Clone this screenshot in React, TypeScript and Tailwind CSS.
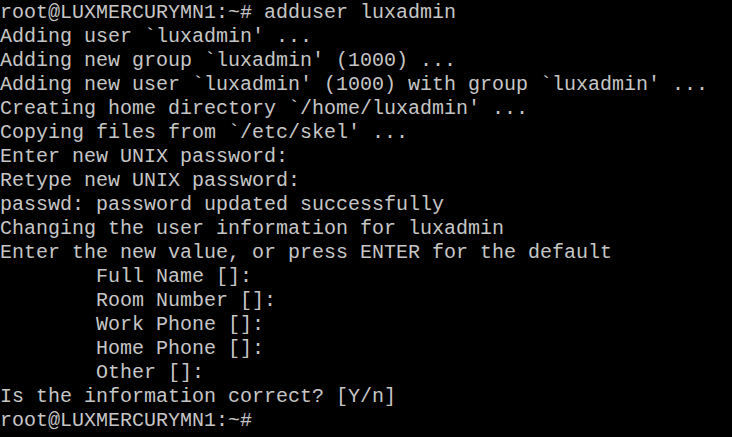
import React from 'react';

const lines = [
  'root@LUXMERCURYMN1:~# adduser luxadmin',
  "Adding user `luxadmin' ...",
  "Adding new group `luxadmin' (1000) ...",
  "Adding new user `luxadmin' (1000) with group `luxadmin' ...",
  "Creating home directory `/home/luxadmin' ...",
  "Copying files from `/etc/skel' ...",
  'Enter new UNIX password:',
  'Retype new UNIX password:',
  'passwd: password updated successfully',
  'Changing the user information for luxadmin',
  'Enter the new value, or press ENTER for the default',
  '        Full Name []:',
  '        Room Number []:',
  '        Work Phone []:',
  '        Home Phone []:',
  '        Other []:',
  'Is the information correct? [Y/n]',
  'root@LUXMERCURYMN1:~#',
];

export default function App() {
  return (
    <div className="w-[732px] h-[437px] bg-black overflow-hidden">
      {/* Console output */}
      <pre
        className="m-0 pt-[1px] text-[20px] leading-[24px] text-[#c6c6c6] whitespace-pre"
        style={{ fontFamily: '"Liberation Mono", "DejaVu Sans Mono", monospace' }}
      >
        {lines.map((line, i) => (
          <div key={i}>{line}</div>
        ))}
      </pre>
    </div>
  );
}
